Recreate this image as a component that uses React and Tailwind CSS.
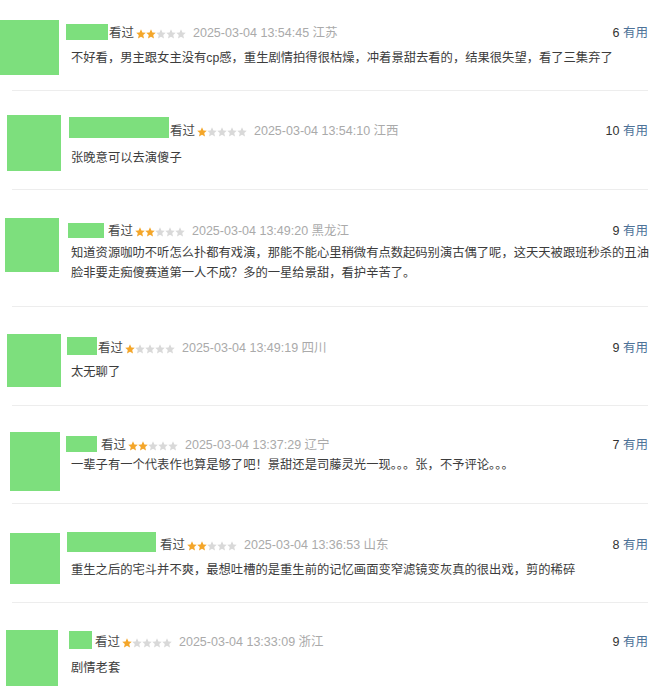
const reviews = [
  {
    h: "h-[91px]",
    avatar: "mt-[20px] ml-0 w-[59px] h-[55px]",
    row: "mt-[24px]",
    name: "ml-[7px] w-[42px] h-[16px]",
    gap: "ml-[1px]",
    text: "mt-[8px] ml-[12px]",
    stars: 2,
    time: "2025-03-04 13:54:45",
    loc: "江苏",
    votes: 6,
    lines: ["不好看，男主跟女主没有cp感，重生剧情拍得很枯燥，冲着景甜去看的，结果很失望，看了三集弃了"],
    divider: true,
  },
  {
    h: "h-[99px]",
    avatar: "mt-[24px] ml-[7px] w-[54px] h-[56px]",
    row: "mt-[26px]",
    name: "ml-[8px] w-[100px] h-[21px]",
    gap: "ml-[1px]",
    text: "mt-[10px] ml-[10px]",
    stars: 1,
    time: "2025-03-04 13:54:10",
    loc: "江西",
    votes: 10,
    lines: ["张晚意可以去演傻子"],
    divider: true,
  },
  {
    h: "h-[117px]",
    avatar: "mt-[28px] ml-[5px] w-[54px] h-[54px]",
    row: "mt-[33px]",
    name: "ml-[9px] w-[36px] h-[15px]",
    gap: "ml-[4px]",
    text: "mt-[5px] ml-[12px]",
    stars: 2,
    time: "2025-03-04 13:49:20",
    loc: "黑龙江",
    votes: 9,
    lines: [
      "知道资源咖叻不听怎么扑都有戏演，那能不能心里稍微有点数起码别演古偶了呢，这天天被跟班秒杀的丑油",
      "脸非要走痴傻赛道第一人不成？多的一星给景甜，看护辛苦了。",
    ],
    divider: true,
  },
  {
    h: "h-[99px]",
    avatar: "mt-[27px] ml-[7px] w-[54px] h-[53px]",
    row: "mt-[30px]",
    name: "ml-[6px] w-[30px] h-[18px]",
    gap: "ml-[1px]",
    text: "mt-[7px] ml-[10px]",
    stars: 1,
    time: "2025-03-04 13:49:19",
    loc: "四川",
    votes: 9,
    lines: ["太无聊了"],
    divider: true,
  },
  {
    h: "h-[98px]",
    avatar: "mt-[26px] ml-[10px] w-[50px] h-[59px]",
    row: "mt-[30px]",
    name: "ml-[6px] w-[31px] h-[16px]",
    gap: "ml-[4px]",
    text: "mt-[3px] ml-[11px]",
    stars: 2,
    time: "2025-03-04 13:37:29",
    loc: "辽宁",
    votes: 7,
    lines: ["一辈子有一个代表作也算是够了吧！景甜还是司藤灵光一现。。。张，不予评论。。。"],
    divider: true,
  },
  {
    h: "h-[99px]",
    avatar: "mt-[29px] ml-[10px] w-[50px] h-[51px]",
    row: "mt-[28px]",
    name: "ml-[7px] w-[89px] h-[20px]",
    gap: "ml-[4px]",
    text: "mt-[8px] ml-[11px]",
    stars: 2,
    time: "2025-03-04 13:36:53",
    loc: "山东",
    votes: 8,
    lines: ["重生之后的宅斗并不爽，最想吐槽的是重生前的记忆画面变窄滤镜变灰真的很出戏，剪的稀碎"],
    divider: true,
  },
  {
    h: "h-[92px]",
    avatar: "mt-[27px] ml-[6px] w-[52px] h-[56px]",
    row: "mt-[28px]",
    name: "ml-[11px] w-[23px] h-[18px]",
    gap: "ml-[3px]",
    text: "mt-[9px] ml-[13px]",
    stars: 1,
    time: "2025-03-04 13:33:09",
    loc: "浙江",
    votes: 9,
    lines: ["剧情老套"],
    divider: false,
  },
];

// five small stars, filled ones in orange
function Stars({ count }) {
  return (
    <span className="ml-[2px] h-[13px] flex items-center">
      {[0, 1, 2, 3, 4].map((i) => (
        <svg key={i} className="w-[10px] h-[10px]" viewBox="1 1 22 22">
          <path
            d="M12 1.8l3.1 6.9 7.4.7-5.6 5 1.7 7.4L12 18l-6.6 3.8 1.7-7.4-5.6-5 7.4-.7z"
            fill={i < count ? "#f4a62a" : "#d9d9d9"}
          />
        </svg>
      ))}
    </span>
  );
}

function Review({ r }) {
  return (
    <div className={`${r.h} flex flex-col`}>
      <div className="flex">
        <div className={`${r.avatar} shrink-0 bg-[#7ddf7d]`} />
        <div className="flex-1 min-w-0 pr-[12px]">
          <div className={`${r.row} flex items-end`}>
            <div className={`${r.name} shrink-0 bg-[#7ddf7d]`} />
            <span className={`${r.gap} text-[12.5px] leading-[13px] text-[#494949]`}>看过</span>
            <Stars count={r.stars} />
            <span className="ml-[7px] text-[12.5px] leading-[13px] text-[#aaaaaa]">
              {r.time} {r.loc}
            </span>
            <span className="ml-auto text-[12.5px] leading-[13px] text-[#333]">
              {r.votes} <span className="text-[#4d7298]">有用</span>
            </span>
          </div>
          <div className={`${r.text} text-[12.3px] leading-[20px] text-[#3c3c3c] whitespace-nowrap`}>
            {r.lines.map((l, i) => (
              <div key={i}>{l}</div>
            ))}
          </div>
        </div>
      </div>
      {r.divider && <div className="mt-auto mx-[12px] h-px bg-[#ededed]" />}
    </div>
  );
}

export default function App() {
  return (
    <div
      className="w-[660px] h-[695px] overflow-hidden bg-white"
      style={{ fontFamily: '"Liberation Sans", "Noto Sans CJK SC", sans-serif' }}
    >
      {reviews.map((r, i) => (
        <Review key={i} r={r} />
      ))}
    </div>
  );
}
